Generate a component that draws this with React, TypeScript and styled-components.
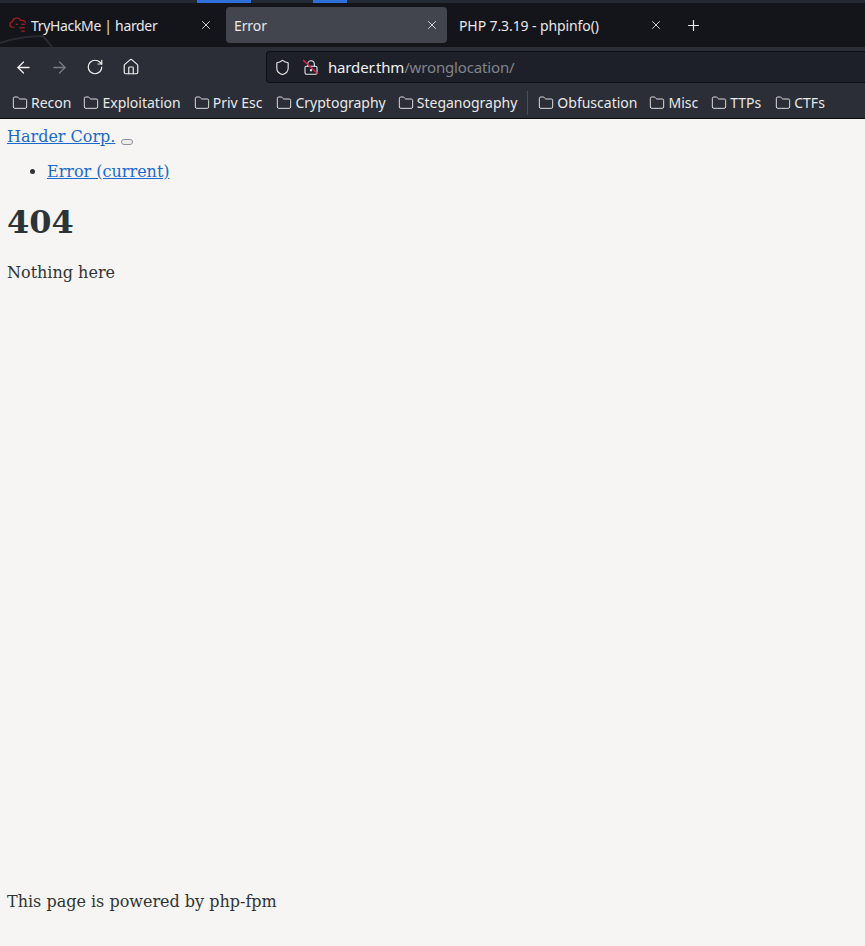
import React from 'react'
import styled, { createGlobalStyle } from 'styled-components'
import { ArrowLeft, ArrowRight, RotateCw, House, Folder, X, Plus, Shield, LockKeyhole } from 'lucide-react'

const GlobalStyle = createGlobalStyle`
  html, body {
    margin: 0;
    padding: 0;
    background: #f6f5f4;
  }
`

const Page = styled.div`
  width: 865px;
  height: 946px;
  display: flex;
  flex-direction: column;
  overflow: hidden;
`
const Chrome = styled.div`
  flex: none;
  font-family: 'Noto Sans', sans-serif;
  color: #e8e8ea;
`
const TopStrip = styled.div`
  height: 3px;
  padding-left: 197px;
  display: flex;
  gap: 62px;
  background: #232a33;
`
const StripMark = styled.div<{ $w: number }>`
  width: ${(p) => p.$w}px;
  background: #2f6fdc;
`
const TabBar = styled.div`
  position: relative;
  height: 44px;
  padding: 4px 2px 0;
  box-sizing: border-box;
  display: flex;
  align-items: flex-start;
  background: #14151a;
  overflow: hidden;
`
const Wallpaper = styled.svg`
  position: absolute;
  left: 0;
  top: 0;
`
const Tab = styled.div<{ $active?: boolean; $w: number; $pl: number; $pr: number }>`
  position: relative;
  width: ${(p) => p.$w}px;
  height: 36px;
  padding: 0 ${(p) => p.$pr}px 0 ${(p) => p.$pl}px;
  box-sizing: border-box;
  display: flex;
  align-items: center;
  border-radius: 4px;
  background: ${(p) => (p.$active ? '#42454e' : 'transparent')};
  font-size: 14px;
`
const TabTitle = styled.span<{ $tight?: boolean }>`
  flex: 1;
  white-space: nowrap;
  letter-spacing: ${(p) => (p.$tight ? '-0.33px' : '-0.1px')};
`
const Favicon = styled.svg`
  flex: none;
  margin-right: 4px;
`
const NewTab = styled.div`
  height: 36px;
  margin-left: 13px;
  display: flex;
  align-items: center;
`
const NavBar = styled.div`
  height: 40px;
  padding-left: 13px;
  display: flex;
  align-items: center;
  background: #2b2e36;
`
const NavButton = styled.div<{ $dim?: boolean; $gap: number }>`
  width: 20px;
  height: 20px;
  margin-right: ${(p) => p.$gap}px;
  display: flex;
  align-items: center;
  justify-content: center;
  color: ${(p) => (p.$dim ? '#7b7d83' : '#eceded')};
`
const UrlBar = styled.div`
  flex: 1;
  height: 32px;
  margin-left: 125px;
  padding-left: 7px;
  box-sizing: border-box;
  display: flex;
  align-items: center;
  background: #1e2029;
  border: 1px solid #0d0e12;
  border-right: none;
  border-radius: 4px 0 0 4px;
  font-size: 15px;
  letter-spacing: -0.16px;
`
const LockWrap = styled.span`
  position: relative;
  width: 16px;
  height: 18px;
  margin: 0 9px 0 12px;
  display: flex;
  align-items: center;
`
const LockStrike = styled.svg`
  position: absolute;
  left: 0;
  top: 1px;
`
const Host = styled.span`
  color: #f0f0f2;
`
const UrlPath = styled.span`
  color: #82848b;
`
const BookmarkBar = styled.div`
  height: 31px;
  padding-left: 12px;
  display: flex;
  align-items: center;
  background: #2b2e36;
  border-bottom: 1px solid #0c0c0f;
  font-size: 14px;
`
const Bookmark = styled.div<{ $gap: number }>`
  margin-right: ${(p) => p.$gap}px;
  display: flex;
  align-items: center;
  gap: 3px;
  white-space: nowrap;
`
const BookmarkSep = styled.div`
  width: 1px;
  height: 24px;
  margin-right: 10px;
  background: #4c4f57;
`
const Content = styled.main`
  flex: 1;
  padding: 6px 7px 0;
  display: flex;
  flex-direction: column;
  background: #f6f5f4;
  color: #2e3436;
  font-family: 'DejaVu Serif', serif;
  font-size: 16px;
  line-height: 24px;
`
const Brand = styled.div`
  display: flex;
  align-items: flex-start;
`
const Link = styled.a`
  color: #1b6acb;
  text-decoration: underline;
`
const Toggler = styled.button`
  width: 12px;
  height: 6px;
  margin: 14px 0 0 6px;
  padding: 0;
  box-sizing: border-box;
  background: #eeeeee;
  border: 1px solid #8f8f9d;
  border-radius: 3px;
`
const NavList = styled.ul`
  margin: 11px 0 0;
  padding: 0 0 0 40px;
`
const Heading = styled.h1`
  margin: 14px 0 0;
  font-size: 32px;
  line-height: 48px;
  font-weight: 700;
`
const Paragraph = styled.p`
  margin: 15px 0 0;
`
const Footer = styled.footer`
  margin-top: auto;
  padding-bottom: 32px;
`

const bookmarks: [string, number][] = [
  ['Recon', 12],
  ['Exploitation', 13],
  ['Priv Esc', 14],
  ['Cryptography', 12],
  ['Steganography', 10],
]
const bookmarks2: [string, number][] = [
  ['Obfuscation', 12],
  ['Misc', 13],
  ['TTPs', 14],
  ['CTFs', 0],
]

const BookmarkItem = ({ name, gap }: { name: string; gap: number }): JSX.Element => (
  <Bookmark $gap={gap}>
    <Folder size={16} strokeWidth={1.4} />
    {name}
  </Bookmark>
)

const App = (): JSX.Element => (
  <Page>
    <GlobalStyle />
    <Chrome>
      <TopStrip>
        <StripMark $w={54} />
        <StripMark $w={34} />
      </TopStrip>
      <TabBar>
        <Wallpaper width="240" height="44" fill="none">
          <path d="M0 40 C 15 35 30 33 43 33 L 52 44" stroke="#2a2b31" strokeWidth="2" />
        </Wallpaper>
        <Tab $w={224} $pl={7} $pr={13}>
          <Favicon width="18" height="18" viewBox="0 0 16 16" fill="none" stroke="#a51d24" strokeWidth="1.1">
            <path d="M5 10 H3.2 C0.2 10 0 5.5 3 5 C3.6 1.5 9.2 0.8 10.6 4 C12.4 3.4 15 4.6 14.6 6.6" />
            <path d="M6 7.5 H8 M11 7.5 H14 M9 10.5 H14 M11 13.5 H14" />
          </Favicon>
          <TabTitle $tight>TryHackMe | harder</TabTitle>
          <X size={14} strokeWidth={1.5} />
        </Tab>
        <Tab $active $w={221} $pl={8} $pr={8}>
          <TabTitle>Error</TabTitle>
          <X size={14} strokeWidth={1.5} />
        </Tab>
        <Tab $w={225} $pl={12} $pr={9}>
          <TabTitle>PHP 7.3.19 - phpinfo()</TabTitle>
          <X size={14} strokeWidth={1.5} />
        </Tab>
        <NewTab>
          <Plus size={17} strokeWidth={1.7} />
        </NewTab>
      </TabBar>
      <NavBar>
        <NavButton $gap={16}>
          <ArrowLeft size={19} strokeWidth={1.6} />
        </NavButton>
        <NavButton $gap={16} $dim>
          <ArrowRight size={19} strokeWidth={1.6} />
        </NavButton>
        <NavButton $gap={16}>
          <RotateCw size={18} strokeWidth={1.6} />
        </NavButton>
        <NavButton $gap={0}>
          <House size={18} strokeWidth={1.6} />
        </NavButton>
        <UrlBar>
          <Shield size={17} strokeWidth={1.6} />
          <LockWrap>
            <LockKeyhole size={17} strokeWidth={1.6} />
            <LockStrike width="16" height="16" viewBox="0 0 16 16">
              <path d="M0 1 L15 15" stroke="#d7264c" strokeWidth="1.5" />
            </LockStrike>
          </LockWrap>
          <Host>harder.thm</Host>
          <UrlPath>/wronglocation/</UrlPath>
        </UrlBar>
      </NavBar>
      <BookmarkBar>
        {bookmarks.map(([name, gap]) => (
          <BookmarkItem key={name} name={name} gap={gap} />
        ))}
        <BookmarkSep />
        {bookmarks2.map(([name, gap]) => (
          <BookmarkItem key={name} name={name} gap={gap} />
        ))}
      </BookmarkBar>
    </Chrome>
    <Content>
      <Brand>
        <Link href="#">Harder Corp.</Link>
        <Toggler aria-label="Toggle navigation" />
      </Brand>
      <NavList>
        <li>
          <Link href="#">Error (current)</Link>
        </li>
      </NavList>
      <Heading>404</Heading>
      <Paragraph>Nothing here</Paragraph>
      <Footer>This page is powered by php-fpm</Footer>
    </Content>
  </Page>
)

export default App
